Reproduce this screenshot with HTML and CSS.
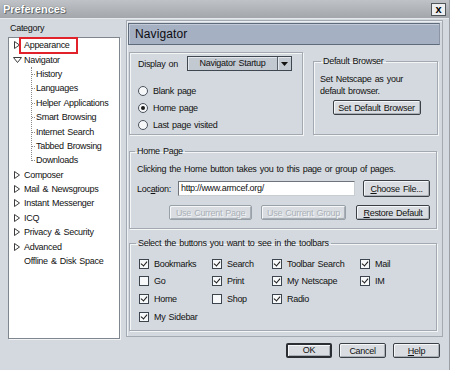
FILE: index.html
```html
<!DOCTYPE html>
<html>
<head>
<meta charset="utf-8">
<link rel="stylesheet" href="styles.css">
</head>
<body>
<div class="window">
  <div class="titlebar">
    <span class="title">Preferences</span>
    <span class="close">x</span>
  </div>
  <div class="main">
    <div class="sidebar">
      <div class="cat-label">Category</div>
      <div class="tree">
        <div class="row"><span class="twisty"><svg width="6" height="8" viewBox="0 0 6 8"><path d="M0.5 0.5 L5.5 4 L0.5 7.5 Z" fill="none" stroke="#3c3c3c"/></svg></span><span class="sel">Appearance</span></div>
        <div class="row"><span class="twisty down"><svg width="9" height="6" viewBox="0 0 9 6"><path d="M0.5 0.5 H8.5 L4.5 5.5 Z" fill="none" stroke="#3c3c3c"/></svg></span><span>Navigator</span></div>
        <div class="children">
          <div class="row child">History</div>
          <div class="row child">Languages</div>
          <div class="row child">Helper Applications</div>
          <div class="row child">Smart Browsing</div>
          <div class="row child">Internet Search</div>
          <div class="row child">Tabbed Browsing</div>
          <div class="row child">Downloads</div>
        </div>
        <div class="row"><span class="twisty"><svg width="6" height="8" viewBox="0 0 6 8"><path d="M0.5 0.5 L5.5 4 L0.5 7.5 Z" fill="none" stroke="#3c3c3c"/></svg></span><span>Composer</span></div>
        <div class="row"><span class="twisty"><svg width="6" height="8" viewBox="0 0 6 8"><path d="M0.5 0.5 L5.5 4 L0.5 7.5 Z" fill="none" stroke="#3c3c3c"/></svg></span><span>Mail &amp; Newsgroups</span></div>
        <div class="row"><span class="twisty"><svg width="6" height="8" viewBox="0 0 6 8"><path d="M0.5 0.5 L5.5 4 L0.5 7.5 Z" fill="none" stroke="#3c3c3c"/></svg></span><span>Instant Messenger</span></div>
        <div class="row"><span class="twisty"><svg width="6" height="8" viewBox="0 0 6 8"><path d="M0.5 0.5 L5.5 4 L0.5 7.5 Z" fill="none" stroke="#3c3c3c"/></svg></span><span>ICQ</span></div>
        <div class="row"><span class="twisty"><svg width="6" height="8" viewBox="0 0 6 8"><path d="M0.5 0.5 L5.5 4 L0.5 7.5 Z" fill="none" stroke="#3c3c3c"/></svg></span><span>Privacy &amp; Security</span></div>
        <div class="row"><span class="twisty"><svg width="6" height="8" viewBox="0 0 6 8"><path d="M0.5 0.5 L5.5 4 L0.5 7.5 Z" fill="none" stroke="#3c3c3c"/></svg></span><span>Advanced</span></div>
        <div class="row"><span class="twisty"></span><span>Offline &amp; Disk Space</span></div>
      </div>
    </div>

    <div class="panel">
      <div class="panel-head">Navigator</div>
      <div class="groups">
        <div class="top-row">
          <div class="group display">
            <div class="display-row">
              <span class="display-label">Display on</span>
              <span class="dropdown"><span class="dd-text">Navigator Startup</span><span class="dd-arrow"><svg width="7" height="4" viewBox="0 0 7 4"><path d="M0 0 H7 L3.5 4 Z" fill="#111"/></svg></span></span>
            </div>
            <div class="radios">
              <div class="radio-row"><span class="radio"></span>Blank page</div>
              <div class="radio-row"><span class="radio on"></span>Home page</div>
              <div class="radio-row"><span class="radio"></span>Last page visited</div>
            </div>
          </div>
          <fieldset class="group fs browser">
            <legend class="lg-browser">Default Browser</legend>
            <div class="browser-text">Set Netscape as your<br>default browser.</div>
            <div class="center"><button class="btn btn-default-browser">Set Default Browser</button></div>
          </fieldset>
        </div>

        <fieldset class="group fs home">
          <legend class="lg-home">Home Page</legend>
          <div class="home-text">Clicking the Home button takes you to this page or group of pages.</div>
          <div class="loc-row">
            <span class="loc-label">Loc<u>a</u>tion:</span>
            <span class="input">http://www.armcef.org/</span>
            <button class="btn btn-choose"><u>C</u>hoose File...</button>
          </div>
          <div class="home-buttons">
            <button class="btn disabled w83">Use Current Page</button>
            <button class="btn disabled w85">Use Current Group</button>
            <button class="btn w74"><u>R</u>estore Default</button>
          </div>
        </fieldset>

        <fieldset class="group fs toolbars">
          <legend class="lg-tool">Select the buttons you want to see in the toolbars</legend>
          <div class="checks">
            <div class="check-item"><span class="cb on"></span>Bookmarks</div>
            <div class="check-item"><span class="cb on"></span>Search</div>
            <div class="check-item"><span class="cb on"></span>Toolbar Search</div>
            <div class="check-item"><span class="cb on"></span>Mail</div>
            <div class="check-item"><span class="cb"></span>Go</div>
            <div class="check-item"><span class="cb on"></span>Print</div>
            <div class="check-item"><span class="cb on"></span>My Netscape</div>
            <div class="check-item"><span class="cb on"></span>IM</div>
            <div class="check-item"><span class="cb on"></span>Home</div>
            <div class="check-item"><span class="cb"></span>Shop</div>
            <div class="check-item"><span class="cb on"></span>Radio</div>
            <div class="check-item"></div>
            <div class="check-item"><span class="cb on"></span>My Sidebar</div>
          </div>
        </fieldset>
      </div>
    </div>
  </div>
  <div class="footer">
    <button class="btn btn-ok w46">OK</button>
    <button class="btn w47">Cancel</button>
    <button class="btn w47"><u>H</u>elp</button>
  </div>
</div>
</body>
</html>
```

FILE: styles.css
```css
* { box-sizing: border-box; }
html, body { margin: 0; padding: 0; }
body {
  width: 450px;
  height: 370px;
  overflow: hidden;
  background: #d4d9df;
  font-family: "Liberation Sans", Arial, sans-serif;
  font-size: 9px;
  letter-spacing: -0.3px;
  word-spacing: 1px;
  color: #111;
}
.window {
  width: 450px;
  height: 370px;
  display: flex;
  flex-direction: column;
  border-right: 1px solid #9aa0a6;
}
.titlebar {
  height: 19px;
  flex: none;
  display: flex;
  align-items: center;
  justify-content: space-between;
  padding: 0 3px 0 3px;
  background: linear-gradient(#bfc3c7, #a3a7ab);
  border-bottom: 1px solid #e6e9ec;
}
.title {
  font-size: 11px;
  font-weight: bold;
  letter-spacing: 0;
  color: #fff;
  text-shadow: 0 0 1px #4a4e52, 1px 1px 0 #6a6e72;
}
.close {
  width: 15px;
  height: 13px;
  border: 1px solid #50555a;
  background: #eceef0;
  font-size: 11px;
  font-weight: bold;
  line-height: 10px;
  text-align: center;
  letter-spacing: 0;
  color: #000;
}
.main {
  height: 321px;
  flex: none;
  display: flex;
  gap: 6px;
  padding: 1px 0 0 8px;
}
.sidebar {
  width: 112px;
  display: flex;
  flex-direction: column;
}
.cat-label {
  height: 17px;
  line-height: 17px;
  padding-left: 2px;
}
.tree {
  flex: 1;
  background: #fff;
  border: 1px solid #7f868e;
  box-shadow: 1px 1px 0 #f2f4f6;
  margin-bottom: 1px;
}
.row {
  height: 14.4px;
  display: flex;
  align-items: center;
  white-space: nowrap;
}
.twisty {
  width: 15px;
  flex: none;
  display: flex;
  align-items: center;
  padding-left: 5px;
}
.twisty.down { padding-left: 4px; }
.twisty svg { display: block; }
.sel {
  padding: 1px 6px 2px 3px;
  margin-left: -3px;
  outline: 2px solid #e2222b;
}
.children { position: relative; }
.children::before {
  content: "";
  position: absolute;
  left: 22px;
  top: 0;
  height: calc(100% - 7px);
  border-left: 1px dotted #8c8c8c;
}
.child {
  position: relative;
  padding-left: 27px;
}
.child::before {
  content: "";
  position: absolute;
  left: 23px;
  top: 50%;
  width: 3px;
  border-top: 1px dotted #8c8c8c;
}
.panel {
  width: 317px;
  height: 317px;
  border: 1px solid #a3aab2;
  box-shadow: inset 1px 1px 0 #eef1f4;
  padding: 2px 2px 0 1px;
}
.panel-head {
  height: 22px;
  background: #a5b0c3;
  border: 1px solid #5f6a7a;
  border-right-color: #8a94a4;
  box-shadow: inset 1px 1px 0 #c3cbd8;
  font-size: 12px;
  letter-spacing: 0.1px;
  line-height: 20px;
  padding-left: 6px;
  color: #0c0c10;
}
.groups { padding: 0 3px 0 1px; }
.group {
  border: 1px solid #a2a9b1;
  box-shadow: inset 1px 1px 0 #f3f5f7, 1px 1px 0 #f3f5f7;
}
.fs {
  margin: 0;
  min-width: 0;
}
.fs legend {
  line-height: 11px;
  padding: 0 2px;
}
.top-row {
  display: grid;
  grid-template-columns: 174px 125px;
  column-gap: 10px;
  align-items: end;
  margin-top: 7px;
}
.display {
  height: 83px;
  padding: 3px 0 0 8px;
}
.display-row {
  display: flex;
  align-items: center;
  height: 15px;
}
.display-label { width: 49px; flex: none; }
.dropdown {
  width: 105px;
  height: 15px;
  display: flex;
  border: 1px solid #3f4750;
  background: #c3c9d1;
  box-shadow: inset 1px 1px 0 #e4e8ec;
}
.dd-text {
  flex: 1;
  text-align: center;
  line-height: 13px;
}
.dd-arrow {
  width: 14px;
  display: flex;
  align-items: center;
  justify-content: center;
  border-left: 1px solid #59616a;
  box-shadow: inset 1px 0 0 #e4e8ec;
}
.dd-arrow svg { display: block; }
.radios { margin-top: 11px; }
.radio-row {
  height: 17px;
  display: flex;
  align-items: center;
}
.radio {
  width: 10px;
  height: 10px;
  border-radius: 50%;
  border: 1px solid #4a525c;
  background: #f6f7f9;
  margin-right: 5px;
  display: flex;
  align-items: center;
  justify-content: center;
}
.radio.on::after {
  content: "";
  width: 4px;
  height: 4px;
  border-radius: 50%;
  background: #1a1a1a;
}
.browser {
  height: 79px;
  padding: 6px 4px 0 6px;
}
.lg-browser { margin-left: 1px; }
.browser-text { line-height: 12px; }
.center {
  display: flex;
  justify-content: center;
  margin-top: 3px;
}
.btn {
  font: inherit;
  letter-spacing: inherit;
  word-spacing: inherit;
  color: #111;
  height: 15px;
  padding: 0;
  border: 1px solid #3b4047;
  border-radius: 2px;
  background: #d9dde1;
  box-shadow: inset 1px 1px 0 #f6f7f8, inset -1px -1px 0 #a8aeb5;
  line-height: 12px;
  text-align: center;
  white-space: nowrap;
}
.btn-default-browser { width: 88px; }
.home {
  height: 83px;
  margin-top: 11px;
  padding: 6px 6px 0 7px;
}
.lg-home { margin-left: -2px; }
.home-text { line-height: 12px; }
.loc-row {
  display: flex;
  align-items: center;
  height: 17px;
  margin-top: 5px;
}
.loc-label { width: 41px; flex: none; }
.input {
  width: 178px;
  height: 15px;
  background: #fff;
  border: 1px solid #6d747c;
  border-right-color: #c8cdd2;
  border-bottom-color: #c8cdd2;
  line-height: 13px;
  padding-left: 2px;
}
.btn-choose {
  width: 67px;
  height: 17px;
  margin-left: 8px;
}
.home-buttons {
  display: flex;
  justify-content: flex-end;
  gap: 9px;
  margin-top: 8px;
}
.home-buttons .w74 { margin-left: 1px; }
.w83 { width: 83px; }
.w85 { width: 85px; }
.w74 { width: 74px; }
.w46 { width: 46px; }
.w47 { width: 47px; }
.btn.disabled {
  color: #aab0b7;
  border-color: #98a0a8;
  text-shadow: 1px 1px 0 #f4f6f8;
}
.toolbars {
  height: 93px;
  margin-top: 9px;
  padding: 6px 0 0 9px;
}
.lg-tool { margin-left: -3px; }
.checks {
  display: grid;
  grid-template-columns: 73px 60px 88px 60px;
  grid-auto-rows: 17.6px;
}
.check-item {
  display: flex;
  align-items: center;
  white-space: nowrap;
}
.cb {
  width: 10px;
  height: 10px;
  flex: none;
  border: 1px solid #3c444e;
  background: #f7f8fa;
  margin-right: 5px;
  position: relative;
}
.cb.on::after {
  content: "";
  position: absolute;
  left: 2px;
  top: 0px;
  width: 3px;
  height: 5px;
  border-right: 1.5px solid #1a1a1a;
  border-bottom: 1.5px solid #1a1a1a;
  transform: rotate(40deg);
}
.footer {
  flex: 1;
  display: flex;
  justify-content: flex-end;
  align-items: flex-start;
  gap: 7px;
  padding: 3px 9px 0 0;
}
.footer .btn { height: 15px; }
.btn-ok {
  border-width: 2px;
  border-color: #2b2f34;
  line-height: 11px;
}
```
